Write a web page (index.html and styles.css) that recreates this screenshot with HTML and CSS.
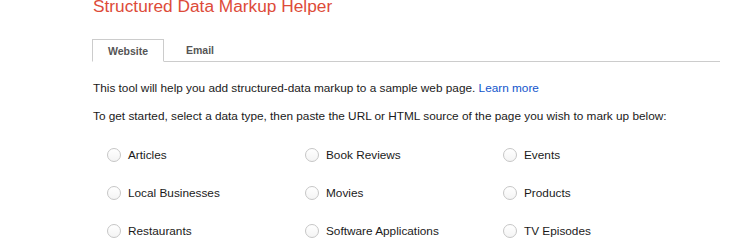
FILE: index.html
```html
<!DOCTYPE html>
<html lang="en">
<head>
    <meta charset="UTF-8">
    <title>Structured Data Markup Helper</title>
    <link rel="stylesheet" href="styles.css">
</head>
<body>
    <div class="page">
        <h1 class="title">Structured Data Markup Helper</h1>

        <!-- Tabs -->
        <div class="tabs">
            <div class="tab active">Website</div>
            <div class="tab">Email</div>
        </div>

        <p class="intro">This tool will help you add structured-data markup to a sample web page. <a href="#">Learn more</a></p>
        <p class="intro">To get started, select a data type, then paste the URL or HTML source of the page you wish to mark up below:</p>

        <!-- Data types -->
        <div class="types">
            <label class="type"><span class="radio"></span>Articles</label>
            <label class="type"><span class="radio"></span>Book Reviews</label>
            <label class="type"><span class="radio"></span>Events</label>
            <label class="type"><span class="radio"></span>Local Businesses</label>
            <label class="type"><span class="radio"></span>Movies</label>
            <label class="type"><span class="radio"></span>Products</label>
            <label class="type"><span class="radio"></span>Restaurants</label>
            <label class="type"><span class="radio"></span>Software Applications</label>
            <label class="type"><span class="radio"></span>TV Episodes</label>
        </div>
    </div>
</body>
</html>
```
FILE: styles.css
```css
body {
    font-family: "Liberation Sans", Arial, sans-serif;
    font-size: 11.8px;
    color: #1a1a1a;
    background: #fff;
    margin: 0;
    overflow: hidden;
}

.page {
    padding-left: 92px;
}

.title {
    font-size: 17.3px;
    font-weight: normal;
    color: #dd4b39;
    line-height: 22px;
    margin: -5px 0 0 1px;
}

.tabs {
    display: flex;
    width: 628px;
    margin-top: 22px;
    border-bottom: 1px solid #ccc;
}

.tab {
    width: 72px;
    height: 22px;
    line-height: 22px;
    text-align: center;
    font-size: 10.5px;
    font-weight: bold;
    color: #555;
    box-sizing: border-box;
    margin-bottom: -1px;
}

.tab.active {
    border: 1px solid #ccc;
    border-bottom: 1px solid #fff;
    background: #fff;
    height: 23px;
}

.intro {
    margin: 0;
    padding-left: 1px;
    line-height: 16px;
}

.tabs + .intro {
    margin-top: 18px;
}

.intro + .intro {
    margin-top: 12px;
}

.intro a {
    color: #1155cc;
    text-decoration: none;
}

.types {
    display: grid;
    grid-template-columns: repeat(3, 198px);
    grid-auto-rows: 16px;
    row-gap: 22px;
    margin-top: 23px;
    padding-left: 15px;
}

.type {
    display: flex;
    align-items: center;
}

.radio {
    width: 12px;
    height: 12px;
    border: 1px solid #c6c6c6;
    border-radius: 50%;
    background: linear-gradient(#fff, #f4f4f4);
    margin-right: 7px;
}
```
